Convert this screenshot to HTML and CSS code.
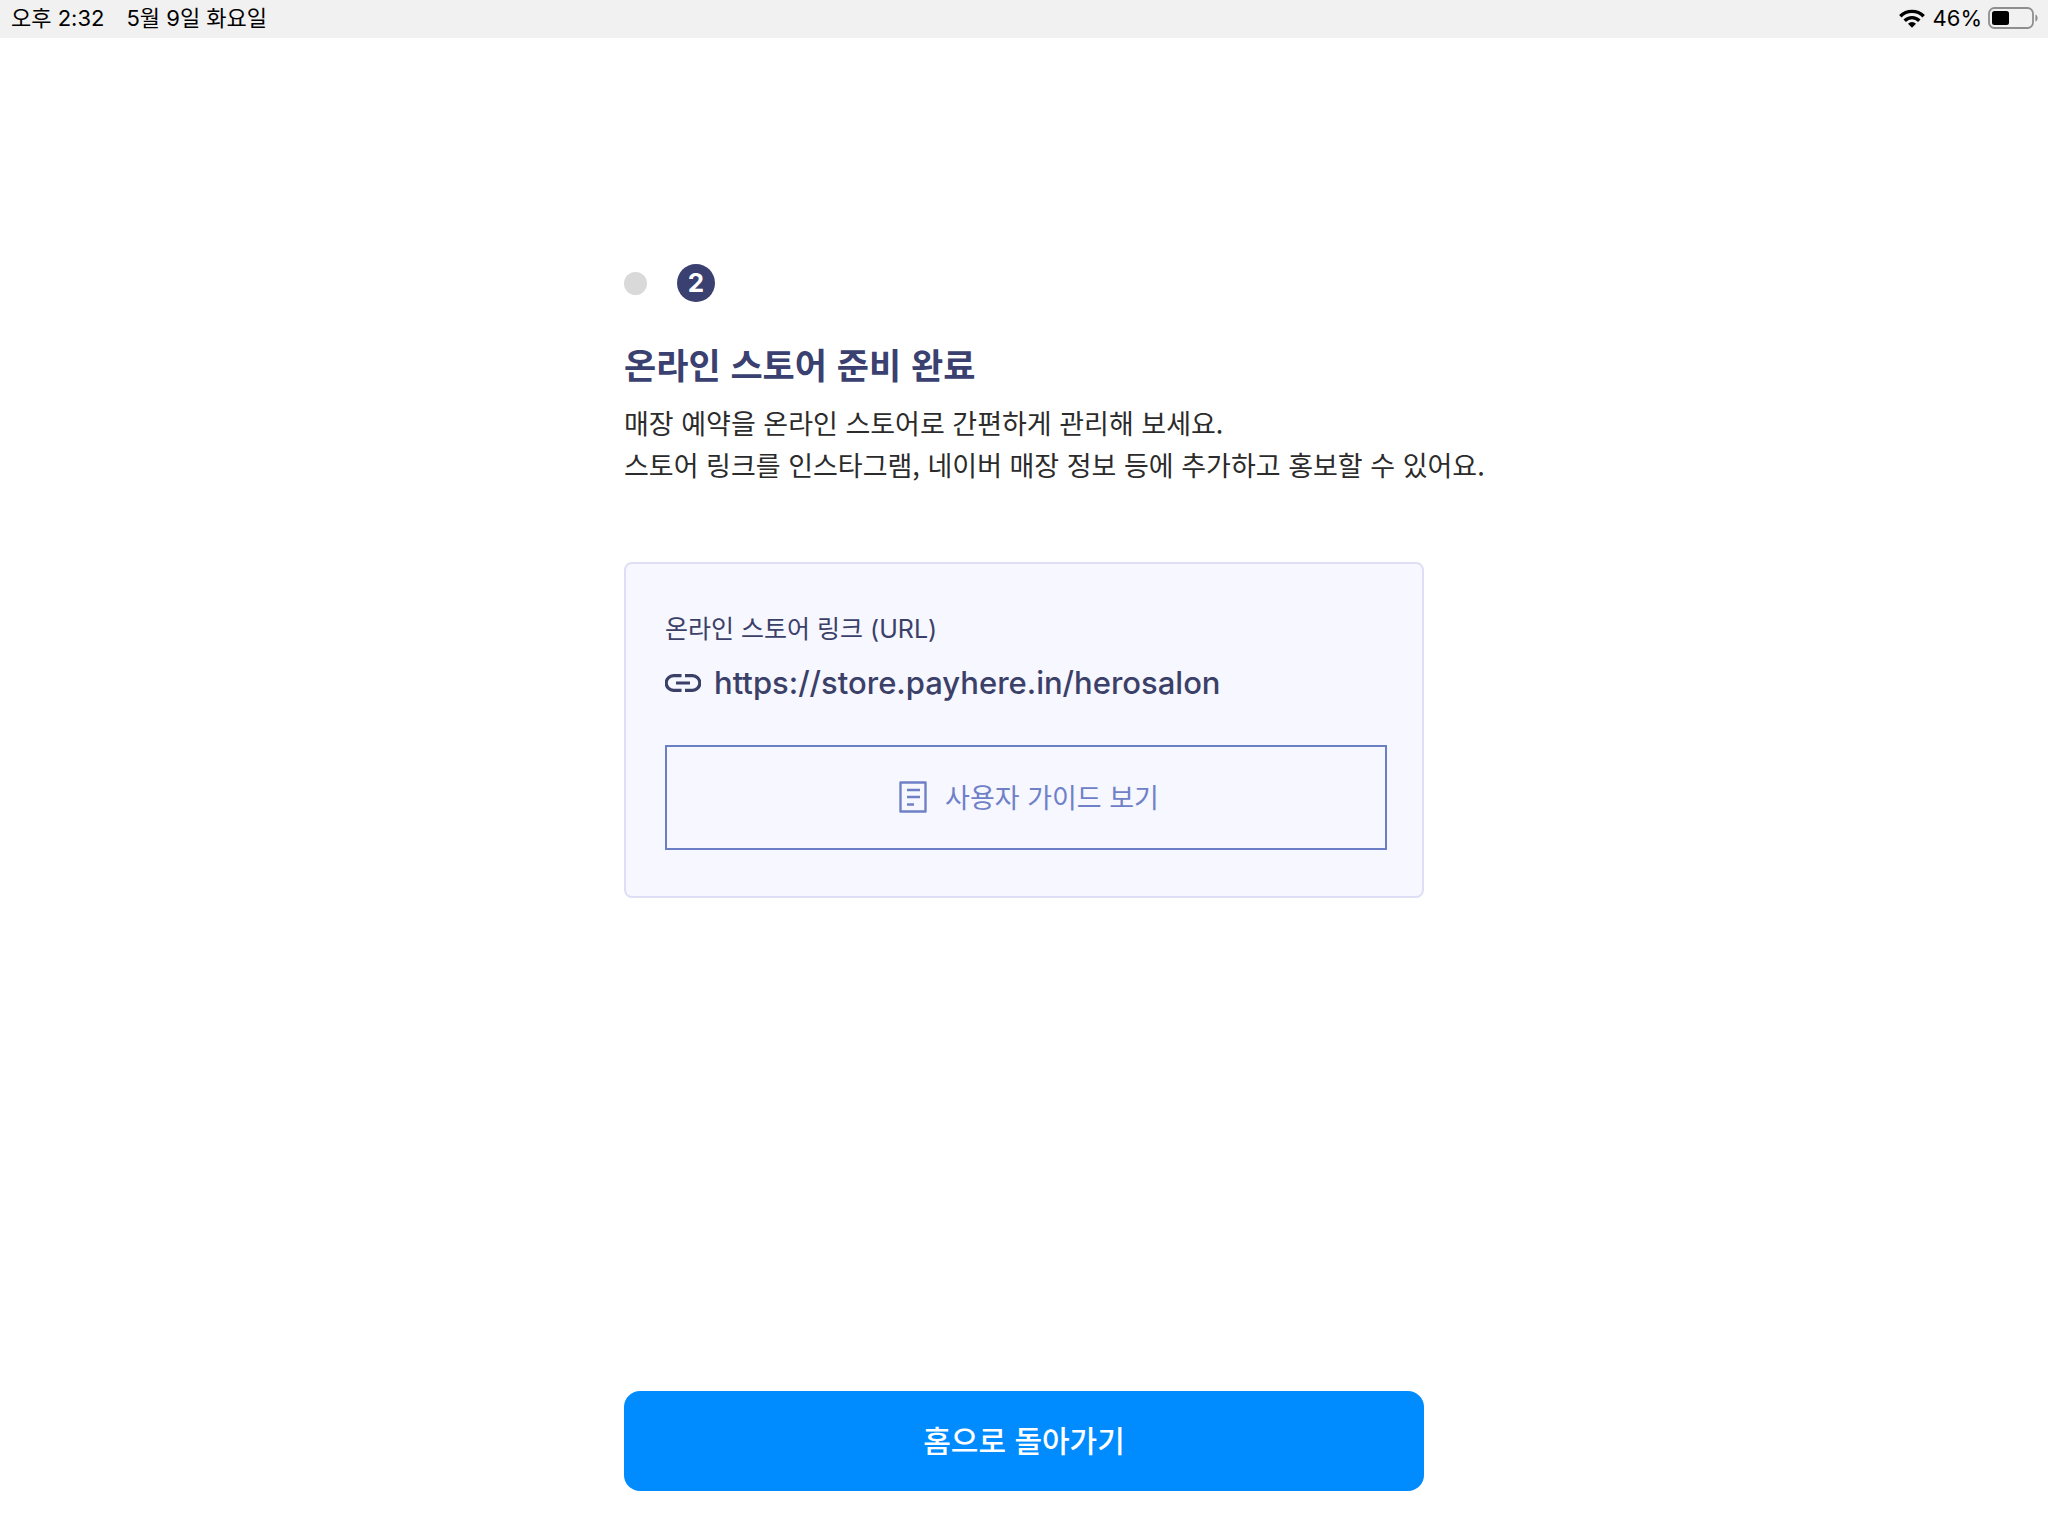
FILE: index.html
```html
<!DOCTYPE html>
<html lang="ko">
<head>
    <meta charset="UTF-8">
    <meta name="viewport" content="width=device-width, initial-scale=1">
    <title>온라인 스토어 준비 완료</title>
    <link rel="stylesheet" href="styles.css">
</head>
<body>

<header class="status-bar">
    <div class="status-left">
        <span>오후 2:32</span>
        <span>5월 9일 화요일</span>
    </div>
    <div class="status-right">
        <svg class="wifi" viewBox="0 0 26 19" aria-hidden="true">
            <g fill="none" stroke="#000" stroke-width="3.4">
                <path d="M1.3 7.2a16.5 16.5 0 0 1 23.4 0"/>
                <path d="M5.7 11.7a10.3 10.3 0 0 1 14.6 0"/>
            </g>
            <path d="M13 18.8l-4-4a5.6 5.6 0 0 1 8 0z"/>
        </svg>
        <span class="percent">46%</span>
        <svg class="battery" viewBox="0 0 50 22" aria-hidden="true">
            <rect x="1" y="1" width="44" height="20" rx="5.5" fill="none" stroke="#8e8e8e" stroke-width="1.8"/>
            <rect x="4" y="4" width="17" height="14" rx="2.5"/>
            <path d="M47.4 7.5c3 1 3 6 0 7z" fill="#8e8e8e"/>
        </svg>
    </div>
</header>

<main class="container">
    <div class="steps">
        <span class="dot"></span>
        <span class="step-number">2</span>
    </div>
    <h1>온라인 스토어 준비 완료</h1>
    <p class="description">매장 예약을 온라인 스토어로 간편하게 관리해 보세요.<br>스토어 링크를 인스타그램, 네이버 매장 정보 등에 추가하고 홍보할 수 있어요.</p>

    <section class="card">
        <p class="card-label">온라인 스토어 링크 (URL)</p>
        <a class="store-link" href="https://store.payhere.in/herosalon">
            <svg class="link-icon" viewBox="0 0 36 18" aria-hidden="true">
                <path d="M16.5 1.700H8.500a7.300 7.300 0 0 0 0 14.600h8M20 1.700h7.500a7.300 7.300 0 0 1 0 14.600H20M11 9h14" fill="none" stroke="#3b4068" stroke-width="3.200"/>
            </svg>
            <span>https://store.payhere.in/herosalon</span>
        </a>
        <button type="button" class="guide-button">
            <svg class="guide-icon" viewBox="0 0 28 32" aria-hidden="true">
                <path d="M1.500 1.500h25v29h-25zM8 9h13M8 16h13M8 23.500h7" fill="none" stroke="#7080c8" stroke-width="2.400" stroke-linejoin="round"/>
            </svg>
            <span>사용자 가이드 보기</span>
        </button>
    </section>
</main>

<footer class="footer">
    <button type="button" class="home-button">홈으로 돌아가기</button>
</footer>

</body>
</html>
```

FILE: styles.css
```css
* {
    box-sizing: border-box;
}
body {
    display: flex;
    flex-direction: column;
    min-height: 100vh;
    margin: 0;
    background: #fff;
    color: #2b2b2b;
    font-family: "Noto Sans CJK KR", sans-serif;
}
button {
    font-family: inherit;
    cursor: pointer;
}
.status-bar {
    display: flex;
    justify-content: space-between;
    align-items: center;
    height: 38px;
    padding: 0 10px 2px 11px;
    background: #f1f1f1;
    color: #000;
    font-family: Inter, "Noto Sans CJK KR", sans-serif;
    font-size: 22px;
    line-height: 32px;
}
.status-left {
    display: flex;
    gap: 22px;
}
.status-right {
    display: flex;
    align-items: center;
}
.wifi {
    width: 26px;
    height: 19px;
    margin-right: 8px;
}
.battery {
    width: 50px;
    height: 22px;
    margin-left: 6px;
}
.container {
    flex: 1;
    width: 100%;
    max-width: 800px;
    margin: 0 auto;
    padding-top: 226px;
}
.steps {
    display: flex;
    align-items: center;
    gap: 30px;
    margin-bottom: 38px;
}
.dot {
    width: 23px;
    height: 23px;
    border-radius: 50%;
    background: #d9d9d9;
}
.step-number {
    width: 38px;
    height: 38px;
    border-radius: 50%;
    background: #3a4070;
    color: #fff;
    font-family: Inter, sans-serif;
    font-size: 26px;
    font-weight: 700;
    line-height: 38px;
    text-align: center;
}
h1 {
    margin: 0 0 14px;
    color: #3a4070;
    font-size: 35px;
    font-weight: 700;
    line-height: 48px;
}
.description {
    margin: 0 0 76px;
    font-size: 27px;
    line-height: 42px;
    white-space: nowrap;
}
.card {
    padding: 46px 35px 46px 39px;
    border: 2px solid #dedff5;
    border-radius: 8px;
    background: #f6f7ff;
    color: #3b4068;
}
.card-label {
    margin: 0 0 15px;
    font-family: Inter, "Noto Sans CJK KR", sans-serif;
    font-size: 25px;
    line-height: 38px;
}
.store-link {
    display: flex;
    align-items: center;
    gap: 13px;
    margin-bottom: 42px;
    color: inherit;
    font-family: Inter, sans-serif;
    font-size: 31px;
    font-weight: 500;
    line-height: 40px;
    text-decoration: none;
}
.link-icon {
    width: 36px;
    height: 18px;
}
.guide-button {
    display: flex;
    justify-content: center;
    align-items: center;
    gap: 18px;
    width: 100%;
    height: 105px;
    padding: 0 0 2px 6px;
    border: 2px solid #6b7fc4;
    background: transparent;
    color: #7080c8;
    font-size: 27px;
}
.guide-icon {
    width: 28px;
    height: 32px;
}
.footer {
    width: 100%;
    max-width: 800px;
    margin: 0 auto;
    padding-bottom: 45px;
}
.home-button {
    display: block;
    width: 100%;
    height: 100px;
    padding: 0 0 5px;
    border: none;
    border-radius: 16px;
    background: #008cff;
    color: #fff;
    font-size: 30px;
    font-weight: 500;
}
```
